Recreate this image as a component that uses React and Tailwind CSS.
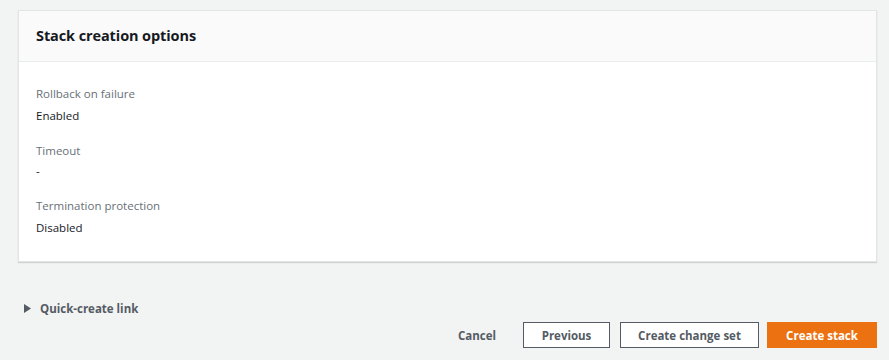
export default function App() {
  const font = { fontFamily: '"Open Sans", "Noto Sans", sans-serif' };
  return (
    <div className="w-[889px] h-[360px] bg-[#f2f3f3] overflow-hidden" style={font}>
      <div className="pl-[18px] pr-[12px] pt-[10px]">
        <div className="bg-white border border-[#e3e5e5] shadow-[0_1px_1px_rgba(0,28,36,0.15)]">
          <div className="h-[51px] bg-[#fafafa] border-b border-[#eaeded] flex items-center pl-[17px]">
            <h2 className="text-[14.5px] font-bold text-[#16191f] tracking-[-0.1px]">Stack creation options</h2>
          </div>
          <div className="pl-[17px] pt-[25px] pb-[26px] text-[11.5px] leading-[14px]">
            <div className="text-[#687078]">Rollback on failure</div>
            <div className="text-[#16191f] mt-[8px]">Enabled</div>
            <div className="text-[#687078] mt-[21px]">Timeout</div>
            <div className="text-[#16191f] mt-[6px]">-</div>
            <div className="text-[#687078] mt-[21px]">Termination protection</div>
            <div className="text-[#16191f] mt-[8px]">Disabled</div>
          </div>
        </div>
      </div>
      <div className="mt-[38px] pl-[24px] flex items-center gap-[8px]">
        <svg width="8" height="9" viewBox="0 0 8 9"><path d="M0 0 L7 4.5 L0 9 Z" fill="#545b64" /></svg>
        <span className="text-[11.5px] font-bold text-[#545b64]">Quick-create link</span>
      </div>
      <div className="mt-[5px] pr-[12px] flex justify-end items-center">
        <button className="text-[11.5px] font-bold text-[#545b64] px-[16px] h-[26px] mr-[11px]">Cancel</button>
        <button className="text-[11.5px] font-bold text-[#545b64] border border-[#545b64] bg-white w-[87px] h-[26px] mr-[10px]">Previous</button>
        <button className="text-[11.5px] font-bold text-[#545b64] border border-[#545b64] bg-white w-[139px] h-[26px] mr-[8px]">Create change set</button>
        <button className="text-[11.5px] font-bold text-white bg-[#ec7211] w-[110px] h-[26px]">Create stack</button>
      </div>
    </div>
  );
}
